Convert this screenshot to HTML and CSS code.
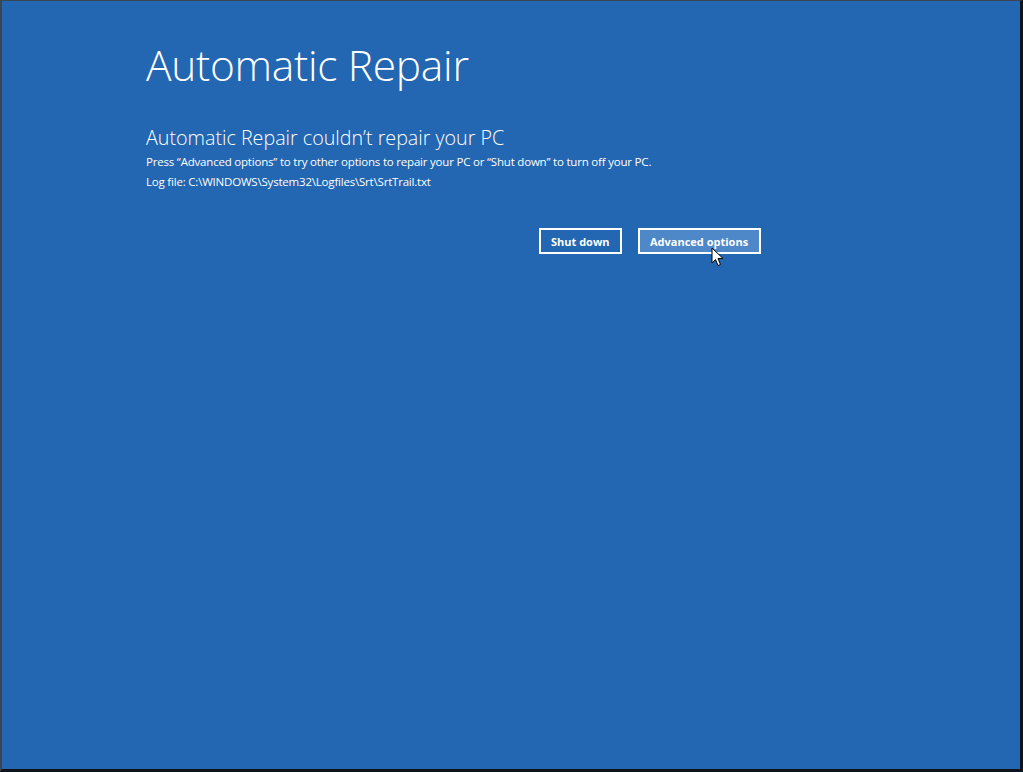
FILE: index.html
```html
<!DOCTYPE html>
<html lang="en">
<head>
    <meta charset="UTF-8">
    <meta name="viewport" content="width=device-width, initial-scale=1.0">
    <title>Automatic Repair</title>
    <link rel="stylesheet" href="styles.css">
</head>
<body>
    <div class="screen">
        <div class="content">
            <h1>Automatic Repair</h1>
            <h2>Automatic Repair couldn’t repair your PC</h2>
            <p class="info">Press “Advanced options” to try other options to repair your PC or “Shut down” to turn off your PC.</p>
            <p class="info log">Log file: C:\WINDOWS\System32\Logfiles\Srt\SrtTrail.txt</p>
            <div class="actions">
                <button class="btn">Shut down</button>
                <button class="btn btn-hover">Advanced options
                    <svg class="cursor" width="14" height="21" viewBox="0 0 14 21">
                        <path d="M1 1 L1 16 L4.5 12.5 L7 18.5 L9.5 17.5 L7 11.5 L12 11.5 Z" fill="#fff" stroke="#000" stroke-width="1" stroke-linejoin="round"/>
                    </svg>
                </button>
            </div>
        </div>
    </div>
</body>
</html>
```

FILE: styles.css
```css
* {
    box-sizing: border-box;
}

body {
    margin: 0;
    width: 1023px;
    height: 772px;
    overflow: hidden;
    font-family: 'Open Sans', 'Noto Sans', sans-serif;
    color: #fff;
    background: #1c1f24;
}

.screen {
    width: 1023px;
    height: 772px;
    background: #2366b1;
    border-left: 2px solid #3b4653;
    border-top: 1px solid #3b4653;
    border-right: 3px solid #101419;
    border-bottom: 3px solid #101419;
}

.content {
    padding: 36px 0 0 144px;
}

h1 {
    margin: 0;
    font-size: 42.5px;
    font-weight: 300;
    line-height: 56px;
    letter-spacing: -0.3px;
}

h2 {
    margin: 32px 0 0;
    font-size: 19.7px;
    font-weight: 300;
    line-height: 26px;
}

.info {
    margin: 3px 0 0;
    font-size: 11.5px;
    line-height: 16px;
    letter-spacing: -0.2px;
}

.log {
    margin-top: 4px;
}

.actions {
    display: flex;
    gap: 16px;
    margin: 38px 0 0 393px;
}

.btn {
    position: relative;
    height: 26px;
    padding: 0 10px;
    border: 2px solid #fff;
    background: #2366b1;
    color: #fff;
    font-family: 'Open Sans', 'Noto Sans', sans-serif;
    font-size: 11px;
    font-weight: 700;
}

.btn-hover {
    width: 123px;
    background: #4f88c8;
}

.cursor {
    position: absolute;
    left: 71px;
    top: 17px;
}
```
